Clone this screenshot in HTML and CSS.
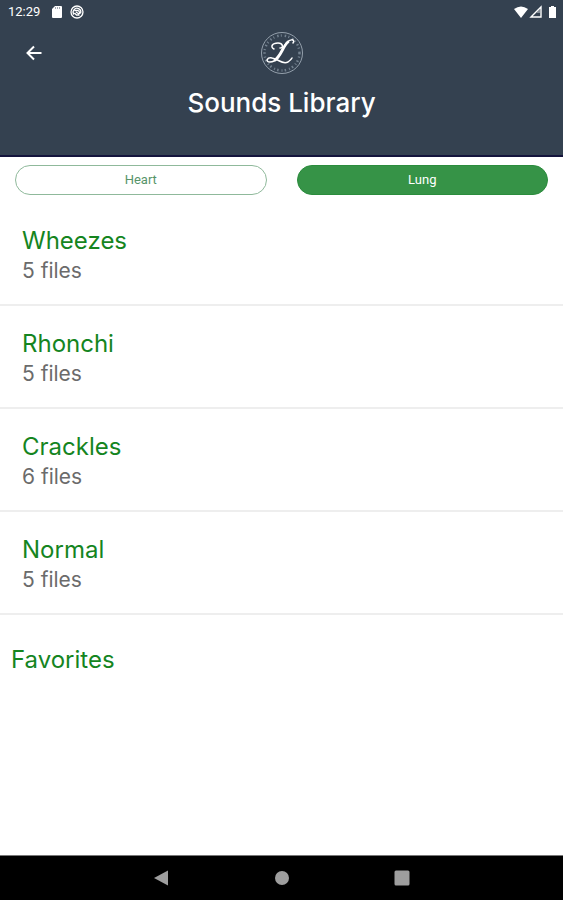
FILE: index.html
```html
<!DOCTYPE html>
<html lang="en">
<head>
<meta charset="utf-8">
<meta name="viewport" content="width=device-width, initial-scale=1">
<title>Sounds Library</title>
<link rel="stylesheet" href="styles.css">
</head>
<body>
<header class="header">
  <div class="status">
    <time class="clock">12:29</time>
    <svg class="status-icon" viewBox="0 0 14 14" aria-hidden="true"><path fill="#fff" d="M5 1h6q1 0 1 1v10q0 1-1 1H3q-1 0-1-1V4z"/><path stroke="#a2a9b2" d="M5.500 2v2M7.500 2v2M9.500 2v2"/></svg>
    <svg class="status-icon" viewBox="0 0 14 14" fill="none" stroke="#fff" aria-hidden="true"><circle cx="7" cy="7" r="6" stroke-width="1.300"/><path stroke-width="1.300" d="M4 9.500A3.800 3.800 0 1 1 10.500 8.500M4.500 5.500h3.500q2 1 1.500 3.500M4.500 8l2 2h3M6 7l3 2"/></svg>
    <svg class="signals" viewBox="0 0 44 14" aria-hidden="true"><path fill="#fff" d="M1 4q7-5 14 0L8 13zM36 2h2V1h3v1h2v11h-7z"/><path fill="none" stroke="#fff" stroke-width="1.400" d="M18 12L28 2v10z"/><path fill="#fff" d="M24 7l3-3v4h-3z" opacity=".4"/></svg>
  </div>
  <div class="toolbar">
    <button class="back" type="button" aria-label="Back"><svg viewBox="0 0 16 16" fill="none" stroke="#fff" stroke-width="2" aria-hidden="true"><path d="M15.500 8H2M8 1.500L1.500 8 8 14.500"/></svg></button>
    <svg class="logo" viewBox="0 0 44 44" fill="none" aria-hidden="true">
      <circle cx="22" cy="22" r="20.500" stroke="#94a0ac"/>
      <circle cx="22" cy="22" r="17.500" stroke="#73818f" stroke-width="2.500" stroke-dasharray="1.500 2.200 1 3"/>
      <path stroke="#fff" stroke-width="1.500" stroke-linecap="round" d="M14 18C10 16 12 12 18 12C23 12 24 17 20 17M33 12C36 8 29 7 25 14C21 21 18 31 10 31C5 31 7 26 12 27C19 28 22 34 28 31Q31 29 32 27"/>
      <path stroke="#fff" stroke-width="2.800" stroke-linecap="round" d="M28 11C23 15 21 25 15 29"/>
    </svg>
  </div>
  <h1 class="title">Sounds Library</h1>
</header>
<main class="content">
  <div class="tabs">
    <button class="tab" type="button" aria-pressed="false">Heart</button>
    <button class="tab tab-active" type="button" aria-pressed="true">Lung</button>
  </div>
  <ul class="list">
    <li class="item"><h2 class="name">Wheezes</h2><p class="count">5 files</p></li>
    <li class="item"><h2 class="name">Rhonchi</h2><p class="count">5 files</p></li>
    <li class="item"><h2 class="name">Crackles</h2><p class="count">6 files</p></li>
    <li class="item"><h2 class="name">Normal</h2><p class="count">5 files</p></li>
  </ul>
  <h2 class="name favorites">Favorites</h2>
</main>
<nav class="navbar" aria-label="System">
  <button class="nav-button" type="button" aria-label="Back"><svg viewBox="0 0 16 16" aria-hidden="true"><path d="M0 8L14 .500v15z"/></svg></button>
  <button class="nav-button" type="button" aria-label="Home"><svg viewBox="0 0 16 16" aria-hidden="true"><circle cx="8" cy="8" r="7"/></svg></button>
  <button class="nav-button" type="button" aria-label="Recent apps"><svg viewBox="0 0 16 16" aria-hidden="true"><rect x=".500" y=".500" width="15" height="15" rx="1.500"/></svg></button>
</nav>
</body>
</html>
```
FILE: styles.css
```css
* { box-sizing: border-box; }
body {
  margin: 0;
  min-height: 100vh;
  display: flex;
  flex-direction: column;
  background: #fff;
  font-family: Inter, "Liberation Sans", sans-serif;
}
h1, h2, p, ul { margin: 0; padding: 0; font-weight: 400; }
button { padding: 0; border: 0; background: none; font: inherit; }
svg { display: block; }
.header {
  padding-bottom: 31px;
  background: #344150;
  border-bottom: 2px solid #14143c;
  color: #fff;
}
.status {
  display: flex;
  align-items: center;
  height: 24px;
  padding: 0 6px 0 8px;
  gap: 6px;
}
.clock { font: 13px/24px Roboto, sans-serif; margin-right: 4px; }
.status-icon { width: 14px; height: 14px; }
.signals { width: 44px; height: 14px; margin-left: auto; }
.toolbar {
  display: grid;
  grid-template-columns: 1fr 44px 1fr;
  align-items: center;
  height: 58px;
  padding: 0 26px;
}
.back { width: 16px; height: 16px; }
.logo { width: 44px; height: 44px; }
.title { font-size: 26px; line-height: 42px; font-weight: 500; text-align: center; }
.content { flex: 1; }
.tabs {
  display: grid;
  grid-template-columns: 1fr 1fr;
  gap: 30px;
  padding: 8px 15px;
}
.tab {
  height: 30px;
  border: 1px solid #8fb99b;
  border-radius: 15px;
  color: #57946a;
  font: 13px/28px Roboto, sans-serif;
}
.tab-active { background: #369347; border-color: #2b8c3d; color: #fff; }
.list { list-style: none; }
.item {
  padding: 22px 22px 19px;
  border-bottom: 2px solid #eee;
}
.name { color: #15851f; font-size: 24px; line-height: 32px; }
.count { color: #6b6b6b; font-size: 21px; line-height: 28px; }
.favorites { padding: 29px 11px; }
.navbar {
  display: flex;
  align-items: center;
  justify-content: center;
  gap: 104px;
  height: 45px;
  background: #000;
  border-top: 1px solid #777;
}
.nav-button { width: 16px; height: 16px; fill: #9e9e9e; }
```
